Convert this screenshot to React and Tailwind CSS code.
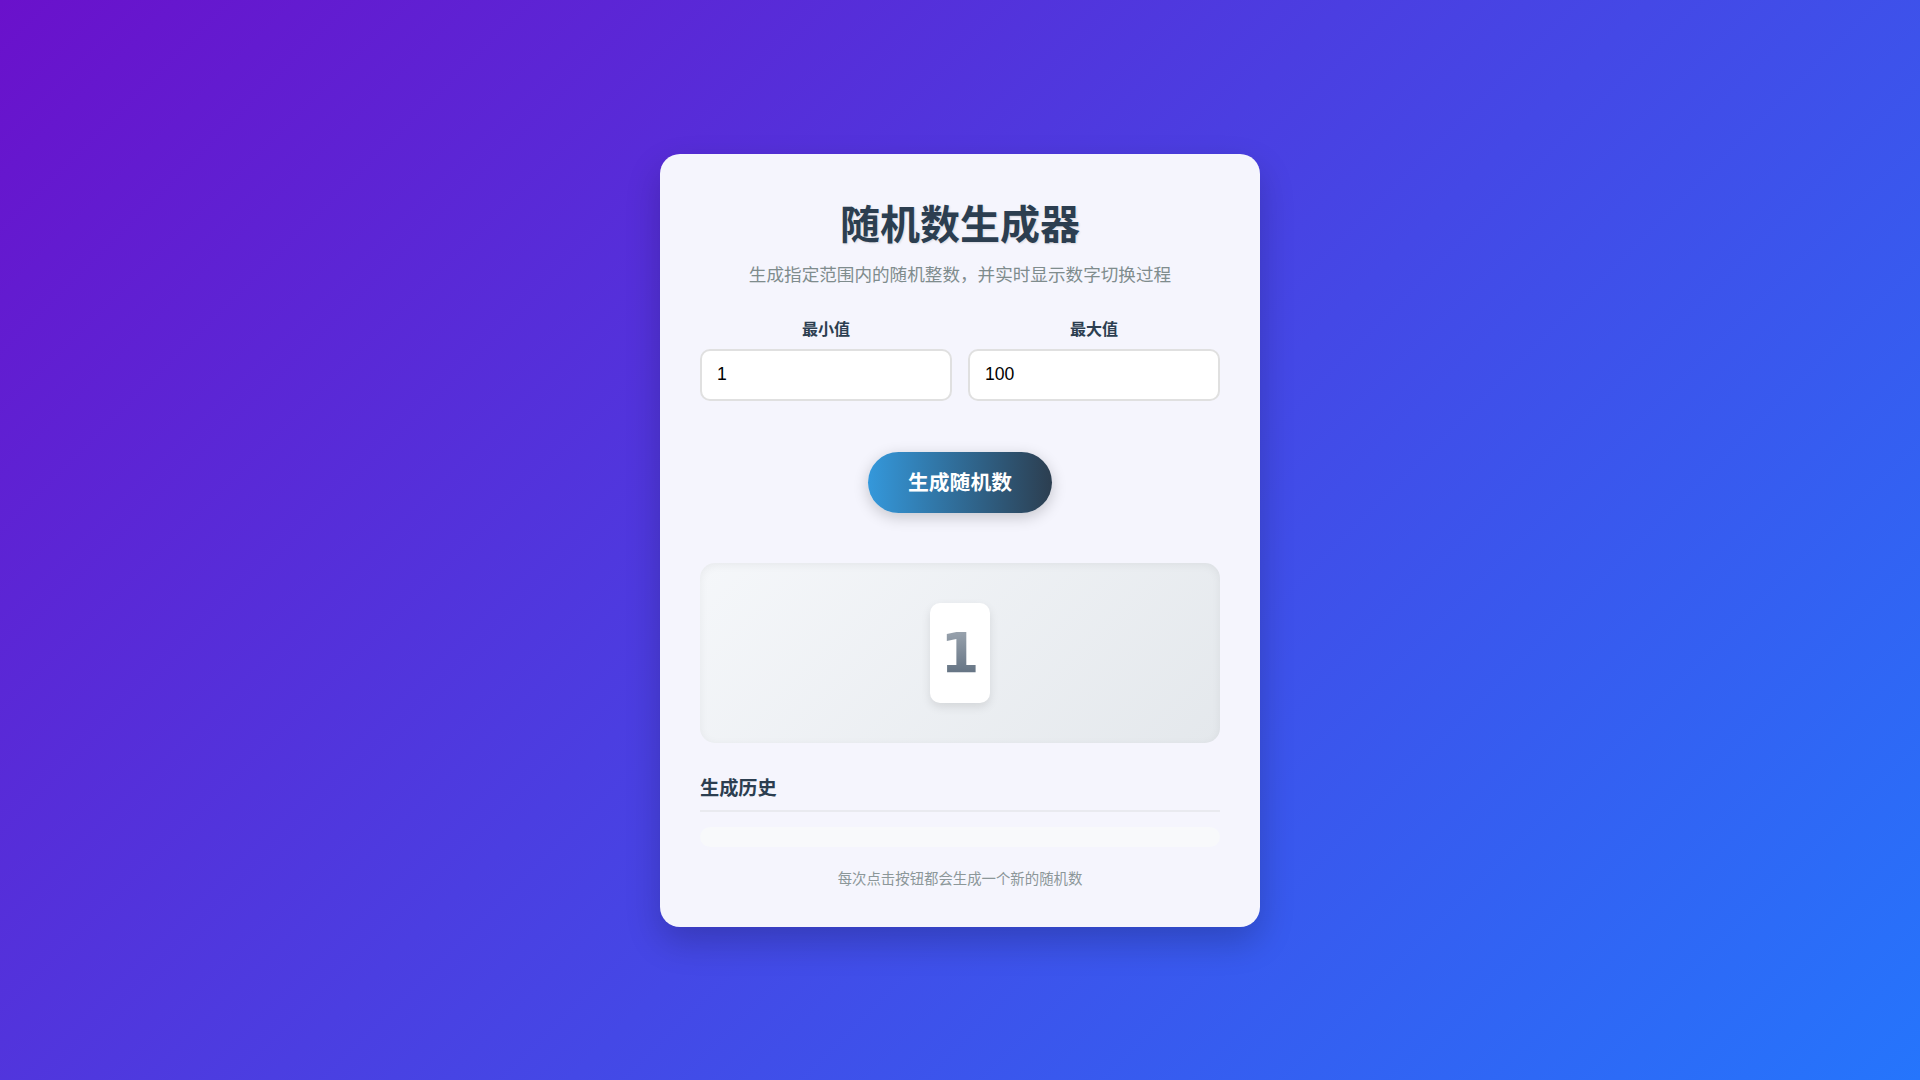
import React, { useState } from "react";

const App = () => {
  const [min, setMin] = useState("1");
  const [max, setMax] = useState("100");
  const [value, setValue] = useState(1);
  const [history, setHistory] = useState([]);

  const generate = () => {
    const lo = parseInt(min, 10) || 0;
    const hi = parseInt(max, 10) || 0;
    const n = Math.floor(Math.random() * (hi - lo + 1)) + lo;
    setValue(n);
    setHistory(h => [n, ...h].slice(0, 10));
  };

  return (
    <div
      className="min-h-screen w-full flex items-center justify-center bg-[linear-gradient(135deg,#6a11cb_0%,#2575fc_100%)]"
      style={{ fontFamily: '"Liberation Sans", "Noto Sans CJK SC", sans-serif' }}
    >
      <div className="w-[600px] bg-[#f5f5fd] rounded-[20px] shadow-[0_15px_35px_rgba(0,0,0,0.2)] px-10 pt-[47px] pb-[37px]">
        <h1 className="text-center text-[40px] leading-[48px] font-bold text-[#2c3e50] [text-shadow:1px_1px_2px_rgba(0,0,0,0.12)]">
          随机数生成器
        </h1>
        <p className="mt-[13px] text-center text-[17.6px] leading-[26px] text-[#7f8c8d]">
          生成指定范围内的随机整数，并实时显示数字切换过程
        </p>

        <div className="mt-[30px] grid grid-cols-2 gap-4">
          <div className="flex flex-col">
            <label className="text-center text-[16px] leading-[24px] font-bold text-[#2c3e50] mb-[7px]">最小值</label>
            <input
              type="number"
              value={min}
              onChange={e => setMin(e.target.value)}
              className="h-[52px] w-full rounded-[10px] border-2 border-[#e0e0e0] bg-white px-[15px] text-[17.6px] text-black outline-none"
            />
          </div>
          <div className="flex flex-col">
            <label className="text-center text-[16px] leading-[24px] font-bold text-[#2c3e50] mb-[7px]">最大值</label>
            <input
              type="number"
              value={max}
              onChange={e => setMax(e.target.value)}
              className="h-[52px] w-full rounded-[10px] border-2 border-[#e0e0e0] bg-white px-[15px] text-[17.6px] text-black outline-none"
            />
          </div>
        </div>

        <div className="mt-[51px] flex justify-center">
          <button
            onClick={generate}
            className="rounded-full bg-[linear-gradient(90deg,#3498db,#2c3e50)] px-10 py-[15px] text-[20.8px] leading-[31px] font-bold text-white shadow-[0_4px_15px_rgba(0,0,0,0.2)]"
          >
            生成随机数
          </button>
        </div>

        <div className="mt-[50px] h-[180px] rounded-[15px] bg-[linear-gradient(135deg,#f5f7fa_0%,#e4e8ec_100%)] shadow-[inset_0_2px_10px_rgba(0,0,0,0.06)] flex items-center justify-center">
          <div className="w-[60px] h-[100px] rounded-[10px] bg-white shadow-[0_4px_10px_rgba(0,0,0,0.1)] flex items-center justify-center">
            <span
              className="text-[56px] leading-none font-bold bg-[linear-gradient(180deg,#a0a9b3,#5b6b7c)] bg-clip-text text-transparent"
              style={{ fontFamily: '"DejaVu Sans", sans-serif' }}
            >
              {value}
            </span>
          </div>
        </div>

        <h3 className="mt-[32px] pb-[7px] border-b-2 border-[#e9eaef] text-[19.2px] leading-[28px] font-bold text-[#2c3e50]">
          生成历史
        </h3>
        <div className="mt-[15px] min-h-[20px] rounded-[10px] bg-[#f8f9fb] flex flex-wrap gap-2">
          {history.map((h, i) => (
            <span key={i} className="px-2 text-sm text-[#2c3e50]">{h}</span>
          ))}
        </div>

        <p className="mt-[22px] text-center text-[14.4px] leading-[21px] text-[#8c9799]">
          每次点击按钮都会生成一个新的随机数
        </p>
      </div>
    </div>
  );
};

export default App;
